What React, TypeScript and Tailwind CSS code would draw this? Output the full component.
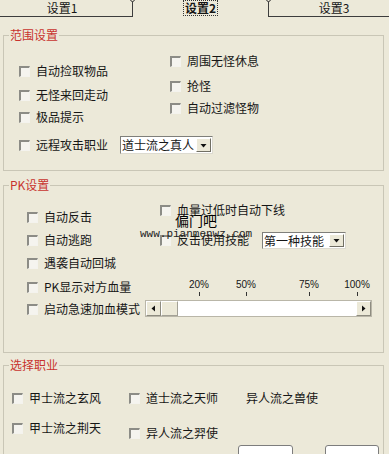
import React from "react";

const FONT = { fontFamily: '"Noto Sans CJK SC", "Noto Sans", sans-serif' };

// XP style unchecked box
const Box: React.FC = () => (
  <span className="w-[11px] h-[11px] shrink-0 border-t-2 border-l-2 border-t-[#8c8c86] border-l-[#8c8c86] border-b border-r border-b-[#f4f3ee] border-r-[#f4f3ee] bg-[#f5f4ef]" />
);

const Check: React.FC<{ label: string; className?: string }> = ({ label, className = "" }) => (
  <div className={`flex items-center h-[18px] ${className}`}>
    <Box />
    <span className="ml-[6px] whitespace-nowrap">{label}</span>
  </div>
);

const Arrow: React.FC<{ dir: "down" | "left" | "right" }> = ({ dir }) => (
  <svg width="7" height="7" viewBox="0 0 7 7">
    {dir === "down" && <polygon points="0.5,2 6.5,2 3.5,5.5" fill="#111" />}
    {dir === "left" && <polygon points="5,0.5 5,6.5 1.5,3.5" fill="#111" />}
    {dir === "right" && <polygon points="2,0.5 2,6.5 5.5,3.5" fill="#111" />}
  </svg>
);

const Select: React.FC<{ value: string; w: string; h: string }> = ({ value, w, h }) => (
  <div className={`flex items-stretch ${w} ${h} bg-white border-t border-l border-t-[#7f7f7a] border-l-[#7f7f7a] border-b border-r border-b-[#dcdad0] border-r-[#dcdad0]`}>
    <span className="flex-1 pl-[1px] leading-[15px] whitespace-nowrap">{value}</span>
    <span className="w-[15px] m-[1px] flex items-center justify-center bg-[#ece9d8] border-t border-l border-t-white border-l-white border-b border-r border-b-[#716f64] border-r-[#716f64]">
      <Arrow dir="down" />
    </span>
  </div>
);

const Legend: React.FC<{ text: string }> = ({ text }) => (
  <legend className="ml-[5px] px-[1px] text-[12px] leading-[14px] text-[#c8332e]">{text}</legend>
);

const marks = [
  { label: "20%", left: "left-[54px]" },
  { label: "50%", left: "left-[101px]" },
  { label: "75%", left: "left-[164px]" },
  { label: "100%", left: "left-[212px]" },
];

export default function App() {
  return (
    <div className="w-[389px] h-[454px] overflow-hidden bg-[#ece9d9] text-[12px] text-[#161616]" style={FONT}>
      {/* tabs */}
      <div className="flex h-[17px] text-[12px] leading-[16px]">
        <div className="w-[132px] border-b border-[#3d3d3d] flex justify-center pr-[8px]">设置1</div>
        <div className="relative w-[137px] border-l border-r border-[#3d3d3d] flex justify-center">
          <span className="absolute -left-[3px] -top-[3px] w-[5px] h-[5px] rounded-full border border-[#3d3d3d] bg-[#ece9d9]" />
          <span className="absolute -right-[3px] -top-[3px] w-[5px] h-[5px] rounded-full border border-[#3d3d3d] bg-[#ece9d9]" />
          <span className="h-[14px] mt-[1px] px-[1px] leading-[13px] font-bold outline outline-1 outline-dotted outline-[#333]">设置2</span>
        </div>
        <div className="flex-1 border-b border-[#3d3d3d] flex justify-center pl-[10px]">设置3</div>
      </div>

      {/* 范围设置 */}
      <fieldset className="ml-[3px] mt-[11px] w-[381px] h-[143px] border border-[#c9c6b6]">
        <Legend text="范围设置" />
        <div className="flex">
          <div className="w-[166px] pl-[15px] pt-[20px] flex flex-col">
            <Check label="自动捡取物品" />
            <Check label="无怪来回走动" className="mt-[6px]" />
            <Check label="极品提示" className="mt-[4px]" />
            <div className="flex items-center mt-[10px]">
              <Check label="远程攻击职业" />
              <div className="ml-[12px]">
                <Select value="道士流之真人" w="w-[93px]" h="h-[18px]" />
              </div>
            </div>
          </div>
          <div className="pt-[10px] flex flex-col">
            <Check label="周围无怪休息" />
            <Check label="抢怪" className="mt-[7px]" />
            <Check label="自动过滤怪物" className="mt-[4px]" />
          </div>
        </div>
      </fieldset>

      {/* PK设置 */}
      <fieldset className="relative ml-[3px] mt-[7px] w-[381px] h-[175px] border border-[#c9c6b6]">
        <Legend text="PK设置" />
        <div className="flex">
          <div className="w-[156px] pl-[23px] pt-[16px] flex flex-col gap-[5px]">
            <Check label="自动反击" />
            <Check label="自动逃跑" />
            <Check label="遇袭自动回城" />
          </div>
          <div className="pt-[9px] flex flex-col">
            <Check label="血量过低时自动下线" />
            <div className="flex items-center mt-[12px]">
              <Check label="反击使用技能" />
              <div className="ml-[13px]">
                <Select value="第一种技能" w="w-[84px]" h="h-[17px]" />
              </div>
            </div>
          </div>
        </div>
        <div className="pl-[23px] mt-[6px] grid grid-cols-[118px_227px] gap-y-[4px]">
          <Check label="PK显示对方血量" />
          <div className="relative h-[18px]">
            {marks.map((m) => (
              <div key={m.label} className={`absolute top-0 ${m.left} w-0 flex flex-col items-center`}>
                <span className="text-[10px] leading-[14px] whitespace-nowrap" style={{ fontFamily: '"Liberation Sans", sans-serif' }}>
                  {m.label}
                </span>
                <span className="w-px h-[4px] bg-[#333]" />
              </div>
            ))}
          </div>
          <Check label="启动急速加血模式" />
          <div className="flex h-[17px] border border-[#b9b6a8] bg-white">
            <span className="w-[15px] flex items-center justify-center bg-[#ece9d8] border-t border-l border-t-white border-l-white border-b border-r border-b-[#8e8c80] border-r-[#8e8c80]">
              <Arrow dir="left" />
            </span>
            <span className="w-[17px] bg-[#ece9d8] border-t border-l border-t-white border-l-white border-b border-r border-b-[#a3a196] border-r-[#a3a196]" />
            <span className="flex-1" />
            <span className="w-[15px] flex items-center justify-center bg-[#ece9d8] border-t border-l border-t-white border-l-white border-b border-r border-b-[#8e8c80] border-r-[#8e8c80]">
              <Arrow dir="right" />
            </span>
          </div>
        </div>
        {/* watermark */}
        <div className="absolute left-[136px] top-[21px] flex flex-col items-center pointer-events-none">
          <span className="text-[14px] leading-[15px] text-black">偏门吧</span>
          <span className="text-[11px] leading-[12px] text-[#222]" style={{ fontFamily: '"Liberation Mono", monospace' }}>
            www.pianmenwz.com
          </span>
        </div>
      </fieldset>

      {/* 选择职业 */}
      <fieldset className="ml-[3px] mt-[5px] w-[381px] h-[120px] border border-[#c9c6b6]">
        <Legend text="选择职业" />
        <div className="pl-[8px] pt-[17px] grid grid-cols-[117px_117px_1fr] items-start">
          <Check label="甲士流之玄风" />
          <Check label="道士流之天师" />
          <div className="h-[18px] flex items-center">异人流之兽使</div>
          <Check label="甲士流之荆天" className="mt-[12px]" />
          <Check label="异人流之羿使" className="mt-[17px]" />
        </div>
        <div className="flex justify-end gap-[32px] pr-[4px] mt-[3px]">
          <button className="w-[55px] h-[23px] rounded-[3px] border border-[#7d7d7d] bg-white" />
          <button className="w-[54px] h-[23px] rounded-[3px] border border-[#7d7d7d] bg-white" />
        </div>
      </fieldset>
    </div>
  );
}
